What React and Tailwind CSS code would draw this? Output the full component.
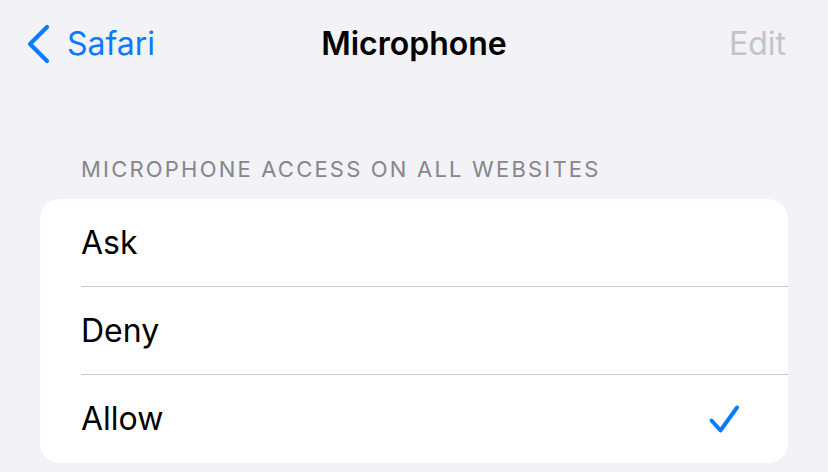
import { ChevronLeft } from 'lucide-react'

const options = [
  { label: 'Ask', selected: false },
  { label: 'Deny', selected: false },
  { label: 'Allow', selected: true },
]

const CheckMark = () => (
  <svg width="32" height="32" viewBox="0 0 32 32" fill="none" className="text-[#0a7aff]">
    <path d="M3.5 17.5 L12.5 27.5 L29 4.5" stroke="currentColor" strokeWidth="4" strokeLinecap="round" strokeLinejoin="round" />
  </svg>
)

const App = () => {
  return (
    <div className="h-[472px] w-[828px] overflow-hidden bg-[#f2f2f7] font-['Inter','Noto_Sans',sans-serif] text-black">
      <header className="grid h-[88px] grid-cols-[1fr_auto_1fr] items-center">
        <button type="button" className="flex items-center text-[#0a7aff]">
          <svg width="26" height="40" viewBox="0 0 26 40" fill="none" className="ml-[25px]">
            <path d="M22 3 L5 20 L22 37" stroke="currentColor" strokeWidth="4.2" strokeLinecap="round" strokeLinejoin="round" />
          </svg>
          <span className="ml-[16px] text-[32px] leading-none">Safari</span>
        </button>
        <h1 className="text-[32px] font-semibold leading-none">Microphone</h1>
        <span className="mr-[42px] justify-self-end text-[32px] leading-none text-[#c4c4c7]">Edit</span>
      </header>

      <p className="ml-[81px] mt-[70px] text-[22px] uppercase leading-none tracking-[2.2px] text-[#86868b]">Microphone access on all websites</p>

      <div className="mx-[40px] mt-[19px] overflow-hidden rounded-[20px] bg-white">
        {options.map((option, index) => (
          <div key={option.label} className="flex h-[88px] items-center pl-[41px]">
            <div className={`flex h-full flex-1 items-center pr-[48px] ${index < options.length - 1 ? 'border-b border-[#c8c8cc]' : ''}`}>
              <span className="flex-1 text-[32px] leading-none">{option.label}</span>
              {option.selected ? <CheckMark /> : null}
            </div>
          </div>
        ))}
      </div>
    </div>
  )
}

export default App
